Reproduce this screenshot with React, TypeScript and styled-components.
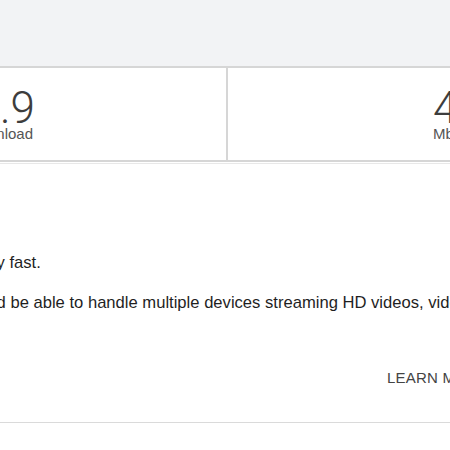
import React from 'react';
import styled, { createGlobalStyle } from 'styled-components';

const GlobalStyle = createGlobalStyle`
  html, body {
    margin: 0;
    padding: 0;
    background: #ffffff;
    font-family: "Liberation Sans", Arial, Helvetica, sans-serif;
  }
  #root {
    width: 450px;
    height: 450px;
    overflow: hidden;
  }
`;

const Page = styled.div`
  width: 907px;
  margin-left: -232px;
  display: flex;
  flex-direction: column;
`;

const TopBand = styled.div`
  height: 66px;
  background-color: #f2f3f5;
`;

const StatsRow = styled.div`
  display: grid;
  grid-template-columns: 460px 447px;
  border-top: 2px solid #d6d6d6;
  border-bottom: 2px solid #d6d6d6;
  height: 92px;
`;

const StatCell = styled.div<{ $align: 'left' | 'right'; $divider?: boolean }>`
  display: flex;
  flex-direction: column;
  align-items: ${(p) => (p.$align === 'right' ? 'flex-end' : 'flex-start')};
  padding: ${(p) => (p.$align === 'right' ? '0 191px 0 0' : '0 0 0 205px')};
  border-right: ${(p) => (p.$divider ? '2px solid #d6d6d6' : 'none')};
  box-sizing: border-box;
`;

const StatValue = styled.div`
  font-family: Roboto, "Liberation Sans", sans-serif;
  font-weight: 300;
  font-size: 44px;
  line-height: 34px;
  margin-top: 23px;
  color: #3d3d3d;
`;

const StatLabel = styled.div`
  font-size: 15px;
  line-height: 18px;
  margin: 0 2px 0 0;
  color: #555555;
`;

const ResultCard = styled.div`
  margin-top: 1px;
  border-top: 1px solid #e8e8e8;
  border-bottom: 1px solid #dadada;
  padding: 90px 0 0 5px;
  height: 260px;
  box-sizing: border-box;
  display: flex;
  flex-direction: column;
`;

const Message = styled.p`
  margin: 0 0 22px 0;
  font-size: 16.6px;
  line-height: 18px;
  color: #1f1f1f;
  white-space: nowrap;
`;

const Actions = styled.div`
  display: flex;
  padding-left: 614px;
  margin-top: 35px;
`;

const LearnMore = styled.button`
  background: none;
  border: none;
  padding: 0;
  font-family: "Liberation Sans", Arial, sans-serif;
  font-size: 15px;
  letter-spacing: 0.2px;
  color: #444444;
  text-transform: uppercase;
  cursor: pointer;
`;

const App: React.FC = () => {
  return (
    <>
      <GlobalStyle />
      <Page>
        <TopBand />
        <StatsRow>
          <StatCell $align="right" $divider>
            <StatValue>19.9</StatValue>
            <StatLabel>Download</StatLabel>
          </StatCell>
          <StatCell $align="left">
            <StatValue>48.2</StatValue>
            <StatLabel>Mbps</StatLabel>
          </StatCell>
        </StatsRow>
        <ResultCard>
          <Message>Your Internet connection is very fast.</Message>
          <Message>
            Your Internet connection should be able to handle multiple devices streaming HD videos, video
            conferencing and gaming at the same time.
          </Message>
          <Actions>
            <LearnMore>Learn more</LearnMore>
          </Actions>
        </ResultCard>
      </Page>
    </>
  );
};

export default App;
